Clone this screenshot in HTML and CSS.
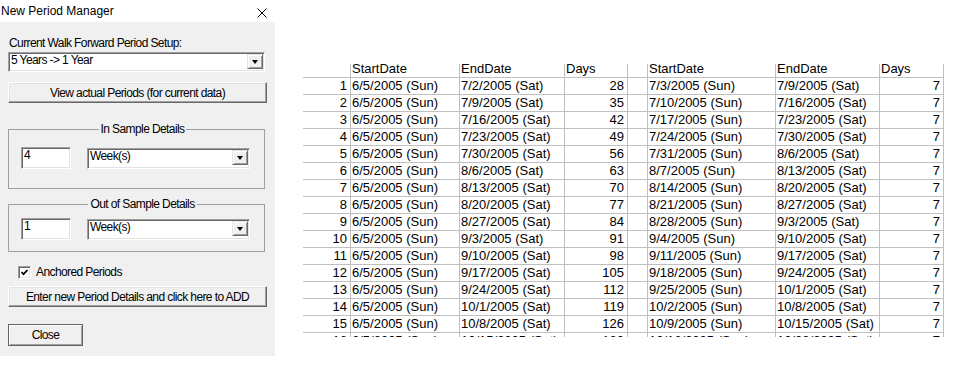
FILE: index.html
```html
<!DOCTYPE html>
<html lang="en">
<head>
  <meta charset="UTF-8" />
  <meta name="viewport" content="width=device-width, initial-scale=1.0"/>
  <title>New Period Manager</title>
  <link rel="stylesheet" href="styles.css">
</head>
<body>

  <!-- Dialog -->
  <div class="dialog">
    <div class="dialog__titlebar">
      <span class="dialog__title">New Period Manager</span>
      <svg class="dialog__close" width="10" height="10" viewBox="0 0 10 10">
        <path d="M0.5 0.5 L9.5 9.5 M9.5 0.5 L0.5 9.5" stroke="#000" stroke-width="1" fill="none"/>
      </svg>
    </div>

    <div class="dialog__body">
      <div class="label">Current Walk Forward Period Setup:</div>
      <div class="combo combo--setup">
        <span class="combo__text">5 Years -&gt; 1 Year</span>
        <span class="combo__btn"><span class="arrow"></span></span>
      </div>

      <button class="btn btn--wide btn--view">View actual Periods (for current data)</button>

      <fieldset class="group group--in">
        <legend>In Sample Details</legend>
        <div class="group__row">
          <div class="textbox">4</div>
          <div class="combo combo--unit">
            <span class="combo__text">Week(s)</span>
            <span class="combo__btn"><span class="arrow"></span></span>
          </div>
        </div>
      </fieldset>

      <fieldset class="group group--out">
        <legend>Out of Sample Details</legend>
        <div class="group__row">
          <div class="textbox">1</div>
          <div class="combo combo--unit">
            <span class="combo__text">Week(s)</span>
            <span class="combo__btn"><span class="arrow"></span></span>
          </div>
        </div>
      </fieldset>

      <label class="check">
        <span class="check__box">
          <svg width="7" height="7" viewBox="0 0 7 7">
            <polyline points="0.5,3 2.5,5.2 6.5,1" stroke="#000" stroke-width="1.7" fill="none"/>
          </svg>
        </span>
        Anchored Periods
      </label>

      <button class="btn btn--wide btn--add">Enter new Period Details and click here to ADD</button>

      <button class="btn btn--close">Close</button>
    </div>
  </div>

  <!-- Periods grid -->
  <div class="periods">
    <table class="periods__table">
      <colgroup>
        <col class="col-num">
        <col class="col-start">
        <col class="col-end">
        <col class="col-days">
        <col class="col-gap">
        <col class="col-start2">
        <col class="col-end2">
        <col class="col-days2">
      </colgroup>
      <thead>
        <tr>
          <th></th><th>StartDate</th><th>EndDate</th><th>Days</th><th></th><th>StartDate</th><th>EndDate</th><th>Days</th>
        </tr>
      </thead>
      <tbody>
        <tr><td class="num">1</td><td>6/5/2005 (Sun)</td><td>7/2/2005 (Sat)</td><td class="num">28</td><td></td><td>7/3/2005 (Sun)</td><td>7/9/2005 (Sat)</td><td class="num">7</td></tr>
        <tr><td class="num">2</td><td>6/5/2005 (Sun)</td><td>7/9/2005 (Sat)</td><td class="num">35</td><td></td><td>7/10/2005 (Sun)</td><td>7/16/2005 (Sat)</td><td class="num">7</td></tr>
        <tr><td class="num">3</td><td>6/5/2005 (Sun)</td><td>7/16/2005 (Sat)</td><td class="num">42</td><td></td><td>7/17/2005 (Sun)</td><td>7/23/2005 (Sat)</td><td class="num">7</td></tr>
        <tr><td class="num">4</td><td>6/5/2005 (Sun)</td><td>7/23/2005 (Sat)</td><td class="num">49</td><td></td><td>7/24/2005 (Sun)</td><td>7/30/2005 (Sat)</td><td class="num">7</td></tr>
        <tr><td class="num">5</td><td>6/5/2005 (Sun)</td><td>7/30/2005 (Sat)</td><td class="num">56</td><td></td><td>7/31/2005 (Sun)</td><td>8/6/2005 (Sat)</td><td class="num">7</td></tr>
        <tr><td class="num">6</td><td>6/5/2005 (Sun)</td><td>8/6/2005 (Sat)</td><td class="num">63</td><td></td><td>8/7/2005 (Sun)</td><td>8/13/2005 (Sat)</td><td class="num">7</td></tr>
        <tr><td class="num">7</td><td>6/5/2005 (Sun)</td><td>8/13/2005 (Sat)</td><td class="num">70</td><td></td><td>8/14/2005 (Sun)</td><td>8/20/2005 (Sat)</td><td class="num">7</td></tr>
        <tr><td class="num">8</td><td>6/5/2005 (Sun)</td><td>8/20/2005 (Sat)</td><td class="num">77</td><td></td><td>8/21/2005 (Sun)</td><td>8/27/2005 (Sat)</td><td class="num">7</td></tr>
        <tr><td class="num">9</td><td>6/5/2005 (Sun)</td><td>8/27/2005 (Sat)</td><td class="num">84</td><td></td><td>8/28/2005 (Sun)</td><td>9/3/2005 (Sat)</td><td class="num">7</td></tr>
        <tr><td class="num">10</td><td>6/5/2005 (Sun)</td><td>9/3/2005 (Sat)</td><td class="num">91</td><td></td><td>9/4/2005 (Sun)</td><td>9/10/2005 (Sat)</td><td class="num">7</td></tr>
        <tr><td class="num">11</td><td>6/5/2005 (Sun)</td><td>9/10/2005 (Sat)</td><td class="num">98</td><td></td><td>9/11/2005 (Sun)</td><td>9/17/2005 (Sat)</td><td class="num">7</td></tr>
        <tr><td class="num">12</td><td>6/5/2005 (Sun)</td><td>9/17/2005 (Sat)</td><td class="num">105</td><td></td><td>9/18/2005 (Sun)</td><td>9/24/2005 (Sat)</td><td class="num">7</td></tr>
        <tr><td class="num">13</td><td>6/5/2005 (Sun)</td><td>9/24/2005 (Sat)</td><td class="num">112</td><td></td><td>9/25/2005 (Sun)</td><td>10/1/2005 (Sat)</td><td class="num">7</td></tr>
        <tr><td class="num">14</td><td>6/5/2005 (Sun)</td><td>10/1/2005 (Sat)</td><td class="num">119</td><td></td><td>10/2/2005 (Sun)</td><td>10/8/2005 (Sat)</td><td class="num">7</td></tr>
        <tr><td class="num">15</td><td>6/5/2005 (Sun)</td><td>10/8/2005 (Sat)</td><td class="num">126</td><td></td><td>10/9/2005 (Sun)</td><td>10/15/2005 (Sat)</td><td class="num">7</td></tr>
        <tr><td class="num">16</td><td>6/5/2005 (Sun)</td><td>10/15/2005 (Sat)</td><td class="num">133</td><td></td><td>10/16/2005 (Sun)</td><td>10/22/2005 (Sat)</td><td class="num">7</td></tr>
      </tbody>
    </table>
  </div>

</body>
</html>
```

FILE: styles.css
```css
* {
  box-sizing: border-box;
  margin: 0;
  padding: 0;
}

body {
  background-color: #fff;
  display: flex;
  align-items: flex-start;
  font-family: "Liberation Sans", Arial, sans-serif;
  color: #000;
}

/* Dialog window */
.dialog {
  width: 275px;
  height: 356px;
  flex-shrink: 0;
  background-color: #f0f0f0;
  font-size: 12px;
  letter-spacing: -0.6px;
  line-height: 14px;
}

.dialog__titlebar {
  height: 22px;
  background-color: #fff;
  display: flex;
  justify-content: space-between;
  align-items: center;
  padding: 0 8px 0 1px;
  letter-spacing: 0;
}

.dialog__title {
  font-size: 12px;
}

.dialog__close {
  margin-top: 3px;
}

.dialog__body {
  padding-left: 8px;
}

.label {
  margin-top: 14px;
  padding-left: 1px;
}

/* Sunken combo box */
.combo {
  display: flex;
  align-items: flex-start;
  background-color: #fff;
  border: 1px solid;
  border-color: #a0a0a0 #fff #fff #a0a0a0;
  box-shadow: inset 1px 1px 0 #696969, inset -1px -1px 0 #e3e3e3;
  padding: 1px;
}

.combo--setup {
  width: 257px;
  height: 20px;
  margin-top: 2px;
}

.combo--unit {
  width: 163px;
  height: 21px;
  margin-top: 1px;
}

.combo__text {
  line-height: 13px;
  padding-left: 1px;
}

.combo__btn {
  margin-left: auto;
  width: 16px;
  height: 15px;
  display: flex;
  align-items: center;
  justify-content: center;
  background-color: #f0f0f0;
  border: 1px solid;
  border-color: #e3e3e3 #696969 #696969 #e3e3e3;
  box-shadow: inset 1px 1px 0 #fff, inset -1px -1px 0 #a0a0a0;
}

.arrow {
  width: 0;
  height: 0;
  border-top: 4px solid #000;
  border-left: 3.5px solid transparent;
  border-right: 3.5px solid transparent;
}

/* Raised push buttons */
.btn {
  display: block;
  font: inherit;
  letter-spacing: inherit;
  color: #000;
  text-align: center;
  background-color: #f0f0f0;
  border: 1px solid;
  border-color: #fff #696969 #696969 #fff;
  box-shadow: inset -1px -1px 0 #a0a0a0, inset 1px 1px 0 #e3e3e3;
}

.btn--wide {
  width: 259px;
  height: 21px;
}

.btn--view {
  margin-top: 10px;
}

.btn--add {
  margin-top: 7px;
}

.btn--close {
  width: 75px;
  height: 22px;
  margin-top: 17px;
  border-color: #646464;
  box-shadow: inset 1px 1px 0 #fff, inset -1px -1px 0 #a0a0a0;
}

/* Group frames */
.group {
  width: 257px;
  border: 1px solid #a0a0a0;
}

.group legend {
  margin: 0 auto;
  padding: 0 2px;
  line-height: 14px;
}

.group--in {
  margin-top: 19px;
  padding: 11px 0 19px 12px;
}

.group--out {
  margin-top: 8px;
  padding: 7px 0 11px 12px;
}

.group__row {
  display: flex;
  gap: 16px;
}

.textbox {
  width: 50px;
  height: 22px;
  background-color: #fff;
  border: 1px solid;
  border-color: #a0a0a0 #fff #fff #a0a0a0;
  box-shadow: inset 1px 1px 0 #696969, inset -1px -1px 0 #e3e3e3;
  padding: 1px 2px;
  line-height: 13px;
}

/* Checkbox */
.check {
  display: flex;
  align-items: center;
  gap: 5px;
  height: 14px;
  margin-top: 13px;
  padding-left: 10px;
}

.check__box {
  width: 13px;
  height: 13px;
  display: flex;
  align-items: center;
  justify-content: center;
  background-color: #fff;
  border: 1px solid;
  border-color: #a0a0a0 #fff #fff #a0a0a0;
  box-shadow: inset 1px 1px 0 #696969, inset -1px -1px 0 #e3e3e3;
}

/* Periods grid */
.periods {
  margin-left: 28px;
  margin-top: 64px;
  height: 273px;
  overflow: hidden;
}

.periods__table {
  margin-top: -3px;
  table-layout: fixed;
  width: 641px;
  border-collapse: separate;
  border-spacing: 0;
  font-size: 13px;
  line-height: 16px;
}

.col-num { width: 48px; }
.col-start { width: 109px; }
.col-end { width: 105px; }
.col-days { width: 63px; }
.col-gap { width: 20px; }
.col-start2 { width: 128px; }
.col-end2 { width: 104px; }
.col-days2 { width: 64px; }

.periods__table th,
.periods__table td {
  border-right: 1px solid #c0c0c0;
  border-bottom: 1px solid #c0c0c0;
  padding: 0 0 0 1px;
  font-weight: normal;
  text-align: left;
  white-space: nowrap;
  overflow: hidden;
}

.periods__table td.num {
  text-align: right;
  padding: 0 3px 0 0;
}
```
